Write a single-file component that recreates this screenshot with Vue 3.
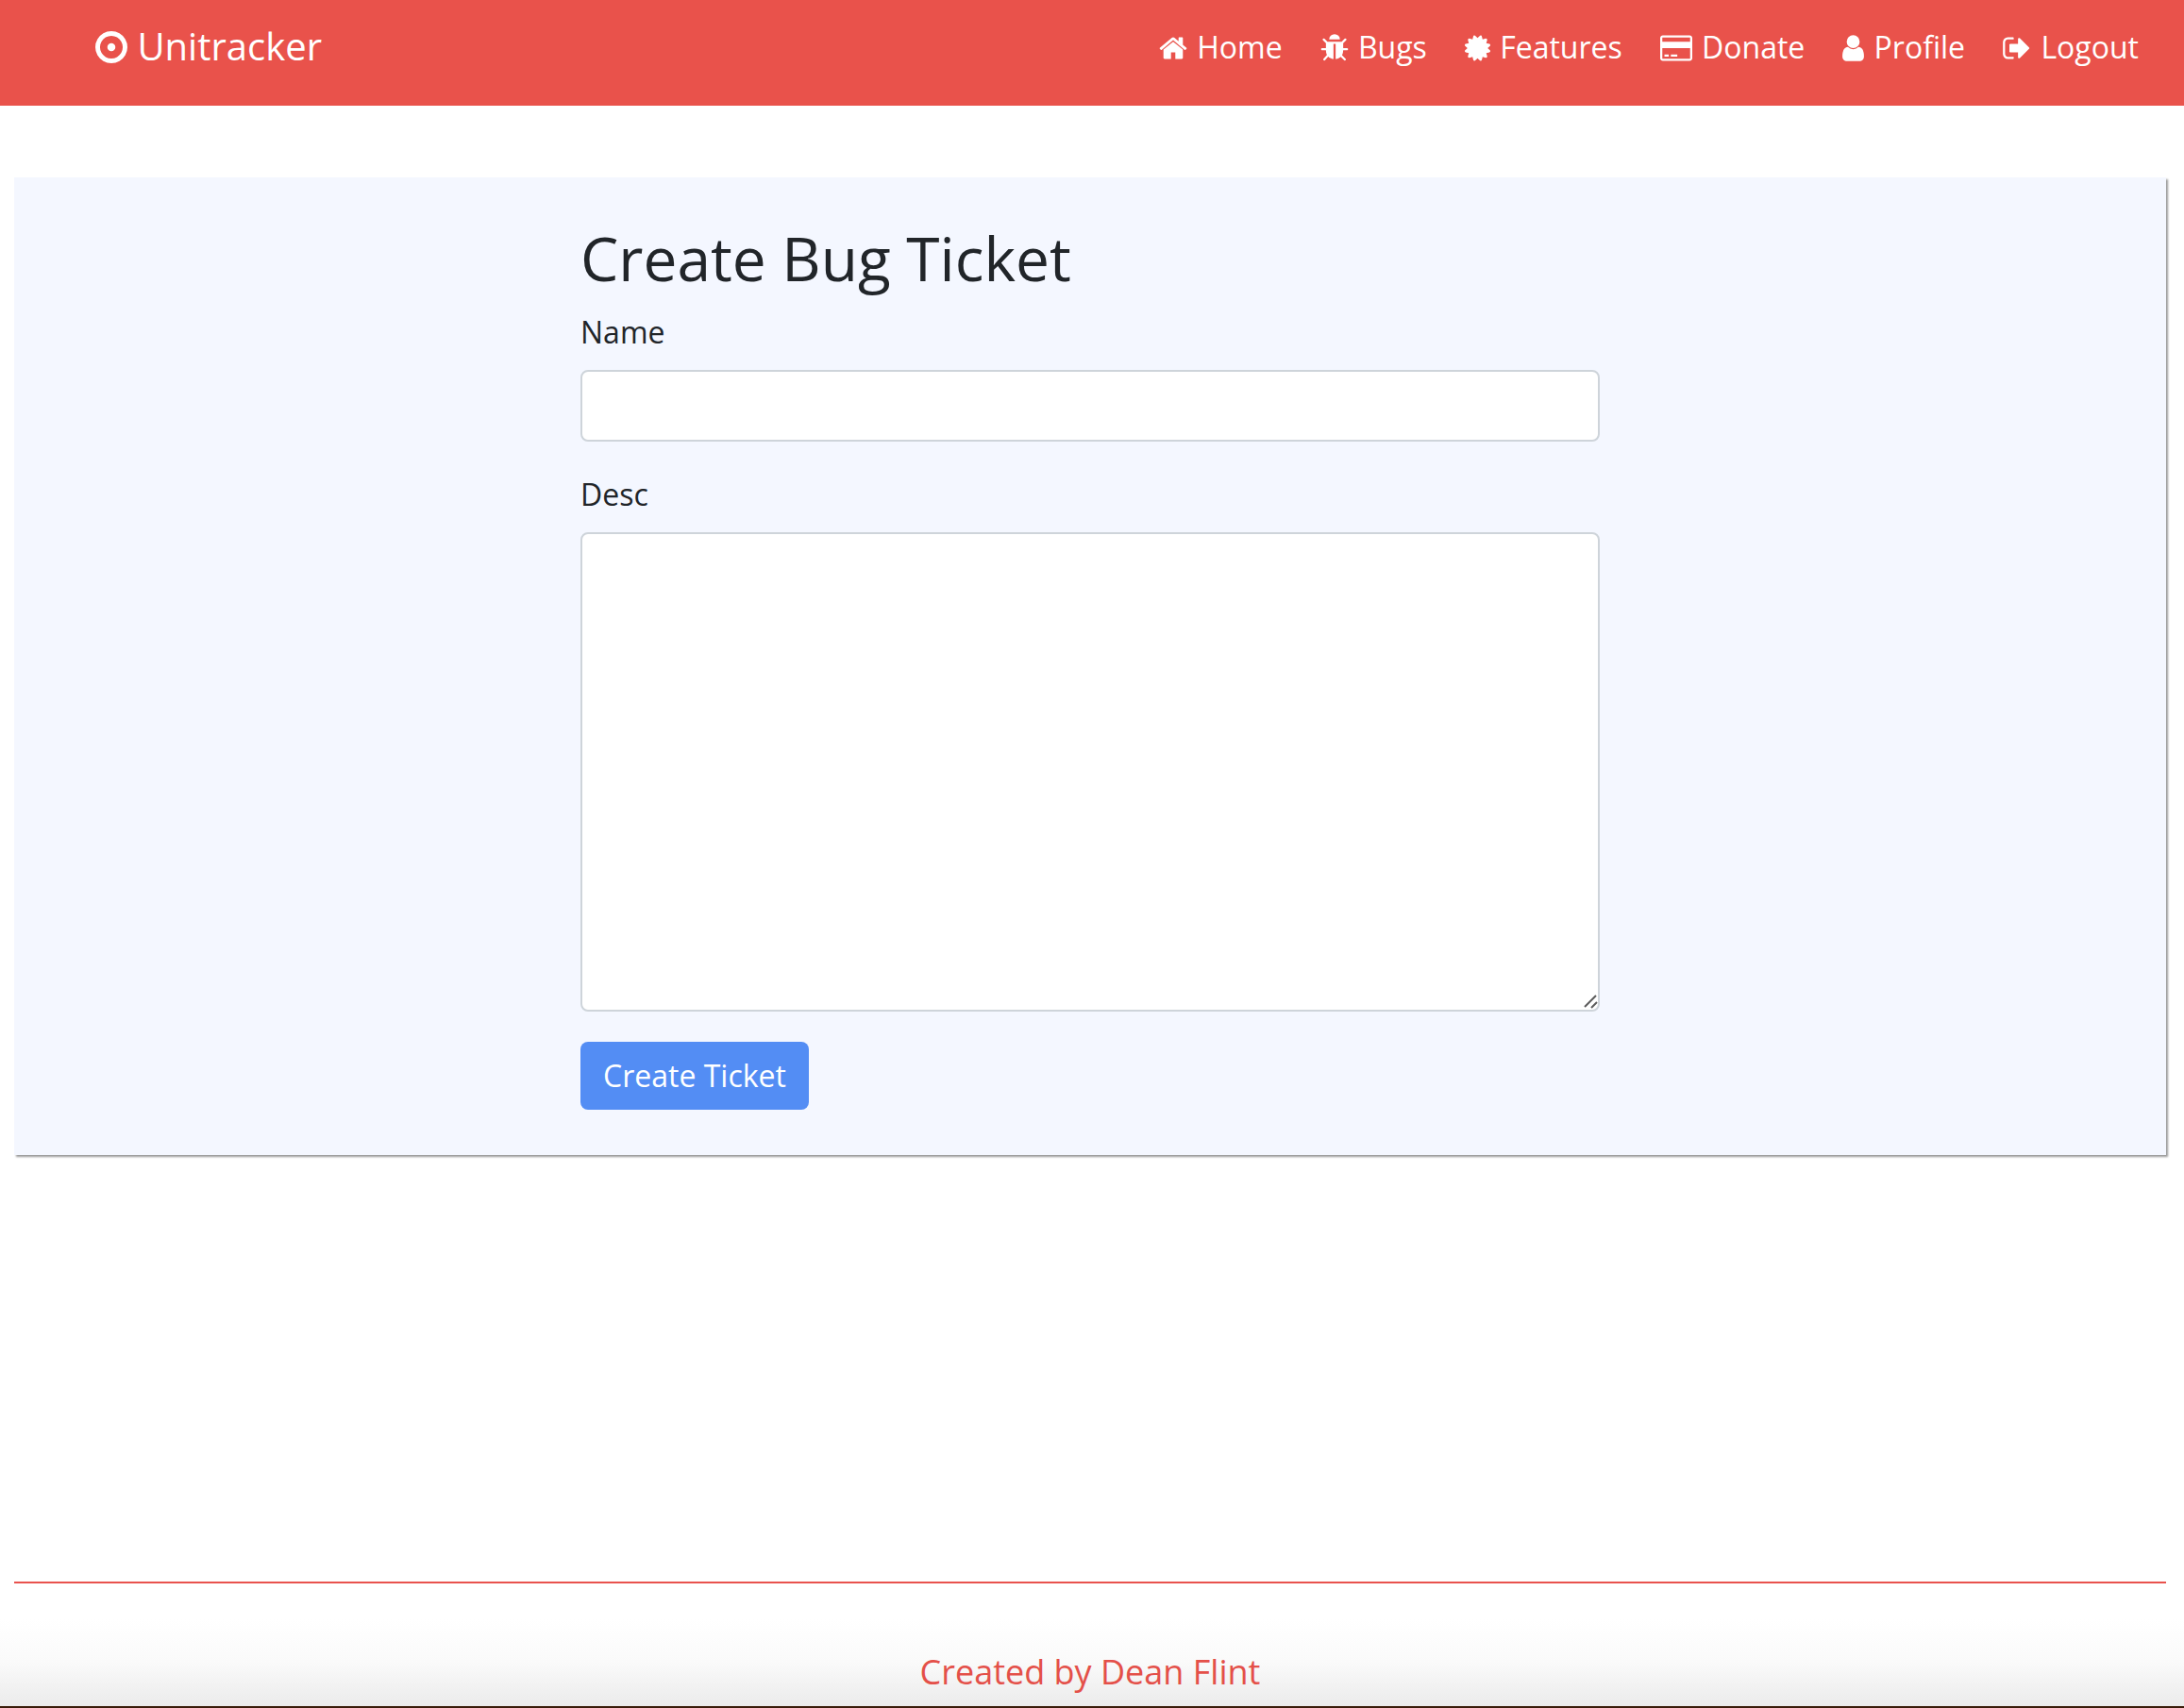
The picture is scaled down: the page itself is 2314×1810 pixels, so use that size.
<script setup>
import { ref } from 'vue'

const name = ref('')
const desc = ref('')

const links = [
  {
    label: 'Home',
    width: 30,
    viewBox: '64 0 1664 1792',
    path: 'M1472 992v480q0 26-19 45t-45 19h-384v-384h-256v384h-384q-26 0-45-19t-19-45v-480q0-1 .5-3t.5-3l575-474 575 474q1 2 1 6zm223-69l-62 74q-8 9-21 11h-3q-13 0-21-7l-692-577-692 577q-12 8-24 7-13-2-21-11l-62-74q-8-10-7-23.5t11-21.5l719-599q32-26 76-26t76 26l244 204v-195q0-14 9-23t23-9h192q14 0 23 9t9 23v408l219 182q10 8 11 21.5t-7 23.5z'
  },
  {
    label: 'Bugs',
    width: 30,
    viewBox: '64 0 1664 1792',
    path: 'M1696 960q0 26-19 45t-45 19h-224q0 171-67 290l208 209q19 19 19 45t-19 45q-18 19-45 19t-45-19l-198-197q-5 5-15 13t-42 28.5-65 36.5-82 29-97 13v-896h-128v896q-51 0-101.5-13.5t-87-33-66-39-43.5-32.5l-15-14-183 207q-20 21-48 21-24 0-43-16-19-18-20.5-44.5t15.5-46.5l202-227q-58-114-58-274h-224q-26 0-45-19t-19-45 19-45 45-19h224v-294l-173-173q-19-19-19-45t19-45 45-19 45 19l173 173h844l173-173q19-19 45-19t45 19 19 45-19 45l-173 173v294h224q26 0 45 19t19 45zm-480-576h-640q0-133 93.5-226.5t226.5-93.5 226.5 93.5 93.5 226.5z'
  },
  {
    label: 'Features',
    width: 27,
    viewBox: '128 0 1536 1792',
    path: 'M1504 896l138 135q30 28 20 70-12 41-52 51l-188 48 53 186q12 41-19 70-29 31-70 19l-186-53-48 188q-10 40-51 52-12 2-19 2-31 0-51-22l-135-138-135 138q-28 30-70 20-41-11-51-52l-48-188-186 53q-41 12-70-19-31-29-19-70l53-186-188-48q-40-10-52-51-10-42 20-70l138-135-138-135q-30-28-20-70 12-41 52-51l188-48-53-186q-12-41 19-70 29-31 70-19l186 53 48-188q10-41 51-51 41-12 70 19l135 139 135-139q29-30 70-19 41 10 51 51l48 188 186-53q41-12 70 19 31 29 19 70l-53 186 188 48q40 10 52 51 10 42-20 70z'
  },
  {
    label: 'Donate',
    width: 34,
    viewBox: '0 0 1920 1792',
    path: 'M1760 128q66 0 113 47t47 113v1216q0 66-47 113t-113 47h-1600q-66 0-113-47t-47-113v-1216q0-66 47-113t113-47h1600zm-1600 128q-13 0-22.5 9.5t-9.5 22.5v224h1664v-224q0-13-9.5-22.5t-22.5-9.5h-1600zm1600 1280q13 0 22.5-9.5t9.5-22.5v-608h-1664v608q0 13 9.5 22.5t22.5 9.5h1600zm-1504-128v-128h256v128h-256zm384 0v-128h384v128h-384z'
  },
  {
    label: 'Profile',
    width: 23,
    viewBox: '256 0 1280 1792',
    path: 'M1536 1399q0 109-62.5 187t-150.5 78h-854q-88 0-150.5-78t-62.5-187q0-85 8.5-160.5t31.5-152 58.5-131 94-89 134.5-34.5q131 128 313 128t313-128q76 0 134.5 34.5t94 89 58.5 131 31.5 152 8.5 160.5zm-256-887q0 159-112.5 271.5t-271.5 112.5-271.5-112.5-112.5-271.5 112.5-271.5 271.5-112.5 271.5 112.5 112.5 271.5z'
  },
  {
    label: 'Logout',
    width: 30,
    viewBox: '64 0 1664 1792',
    path: 'M704 1440q0 4 1 20t.5 26.5-3 23.5-10 19.5-20.5 6.5h-320q-119 0-203.5-84.5t-84.5-203.5v-704q0-119 84.5-203.5t203.5-84.5h320q13 0 22.5 9.5t9.5 22.5q0 4 1 20t.5 26.5-3 23.5-10 19.5-20.5 6.5h-320q-66 0-113 47t-47 113v704q0 66 47 113t113 47h312l11.5 1 11.5 3 8 5.5 7 9 2 13.5zm928-544q0 26-19 45l-544 544q-19 19-45 19t-45-19-19-45v-288h-448q-26 0-45-19t-19-45v-384q0-26 19-45t45-19h448v-288q0-26 19-45t45-19 45 19l544 544q19 19 19 45z'
  }
]
</script>

<template>
  <div class="page">
    <header class="navbar">
      <a class="brand" href="#">
        <svg class="brand-icon" viewBox="128 0 1536 1792" aria-hidden="true">
          <path d="M1088 896q0 80-56 136t-136 56-136-56-56-136 56-136 136-56 136 56 56 136zm-192-544q-148 0-273 73t-198 198-73 273 73 273 198 198 273 73 273-73 198-198 73-273-73-273-198-198-273-73zm768 544q0 209-103 385.5t-279.5 279.5-385.5 103-385.5-103-279.5-279.5-103-385.5 103-385.5 279.5-279.5 385.5-103 385.5 103 279.5 279.5 103 385.5z" />
        </svg> Unitracker
      </a>
      <nav class="links">
        <a v-for="link in links" :key="link.label" class="link" href="#">
          <svg class="link-icon" :width="link.width" :viewBox="link.viewBox" aria-hidden="true">
            <path :d="link.path" />
          </svg> {{ link.label }}
        </a>
      </nav>
    </header>

    <main class="content">
      <section class="card">
        <form class="form" @submit.prevent>
          <h1 class="title">Create Bug Ticket</h1>
          <div class="group">
            <label class="label" for="ticket-name">Name</label>
            <input id="ticket-name" v-model="name" class="control" type="text" />
          </div>
          <div class="group">
            <label class="label" for="ticket-desc">Desc</label>
            <div class="area">
              <textarea id="ticket-desc" v-model="desc" class="control control-area"></textarea>
              <svg class="grip" viewBox="0 0 16 16" aria-hidden="true">
                <path d="M2 13L14 1M9 14L15 8" />
              </svg>
            </div>
          </div>
          <button class="submit" type="submit">Create Ticket</button>
        </form>
      </section>
    </main>

    <footer class="footer">
      <p class="credit">Created by Dean Flint</p>
    </footer>
  </div>
</template>

<style>
body {
  margin: 0;
  background: #fff;
}
</style>

<style scoped>
.page {
  display: flex;
  flex-direction: column;
  min-height: 100vh;
  box-sizing: border-box;
  font-family: "Open Sans", "Noto Sans", sans-serif;
  font-size: 32px;
  line-height: 48px;
  color: #212529;
}

.navbar {
  display: flex;
  align-items: flex-start;
  justify-content: space-between;
  min-height: 112px;
  box-sizing: border-box;
  padding: 19px 48px 0 101px;
  background: #e9524b;
}

.brand,
.link {
  color: #fff;
  text-decoration: none;
  white-space: nowrap;
}

.brand {
  font-size: 40px;
  line-height: 60px;
}

.brand-icon {
  width: 34px;
  height: 40px;
  vertical-align: -6px;
  fill: currentColor;
}

.links {
  display: flex;
  gap: 40px;
}

.link {
  line-height: 62px;
}

.link-icon {
  height: 32px;
  margin-right: 2px;
  vertical-align: -5px;
  fill: currentColor;
}

.content {
  padding: 76px 19px 76px 15px;
}

.card {
  padding: 48px;
  background: #f4f7ff;
  box-shadow: 2px 2px 2px rgba(0, 0, 0, 0.4);
}

.form {
  max-width: 1080px;
  margin: 0 auto;
}

.title {
  margin: 0 0 16px;
  font-size: 64px;
  font-weight: 400;
  line-height: 76px;
}

.group {
  margin-bottom: 32px;
}

.label {
  display: block;
  margin-bottom: 16px;
}

.control {
  display: block;
  width: 100%;
  height: 76px;
  box-sizing: border-box;
  margin: 0;
  padding: 12px 24px;
  border: 2px solid #ced4da;
  border-radius: 8px;
  background: #fff;
  color: #495057;
  font: inherit;
}

.area {
  position: relative;
}

.control-area {
  height: 508px;
  resize: none;
}

.grip {
  position: absolute;
  right: 2px;
  bottom: 2px;
  width: 16px;
  height: 16px;
  fill: none;
  stroke: #5c5c5c;
  stroke-width: 2;
  pointer-events: none;
}

.submit {
  display: block;
  padding: 12px 24px;
  border: 0;
  border-radius: 8px;
  background: #538df4;
  color: #fff;
  font: inherit;
}

.footer {
  margin-top: auto;
  padding: 0 19px 0 15px;
  border-bottom: 2px solid #3a1c0a;
  background: linear-gradient(#fff 30%, #fafafa 65%, #ebebeb);
}

.credit {
  margin: 0;
  padding: 67px 0 9px;
  border-top: 2px solid #e9524d;
  color: #e45049;
  font-size: 36px;
  line-height: 54px;
  text-align: center;
}
</style>
